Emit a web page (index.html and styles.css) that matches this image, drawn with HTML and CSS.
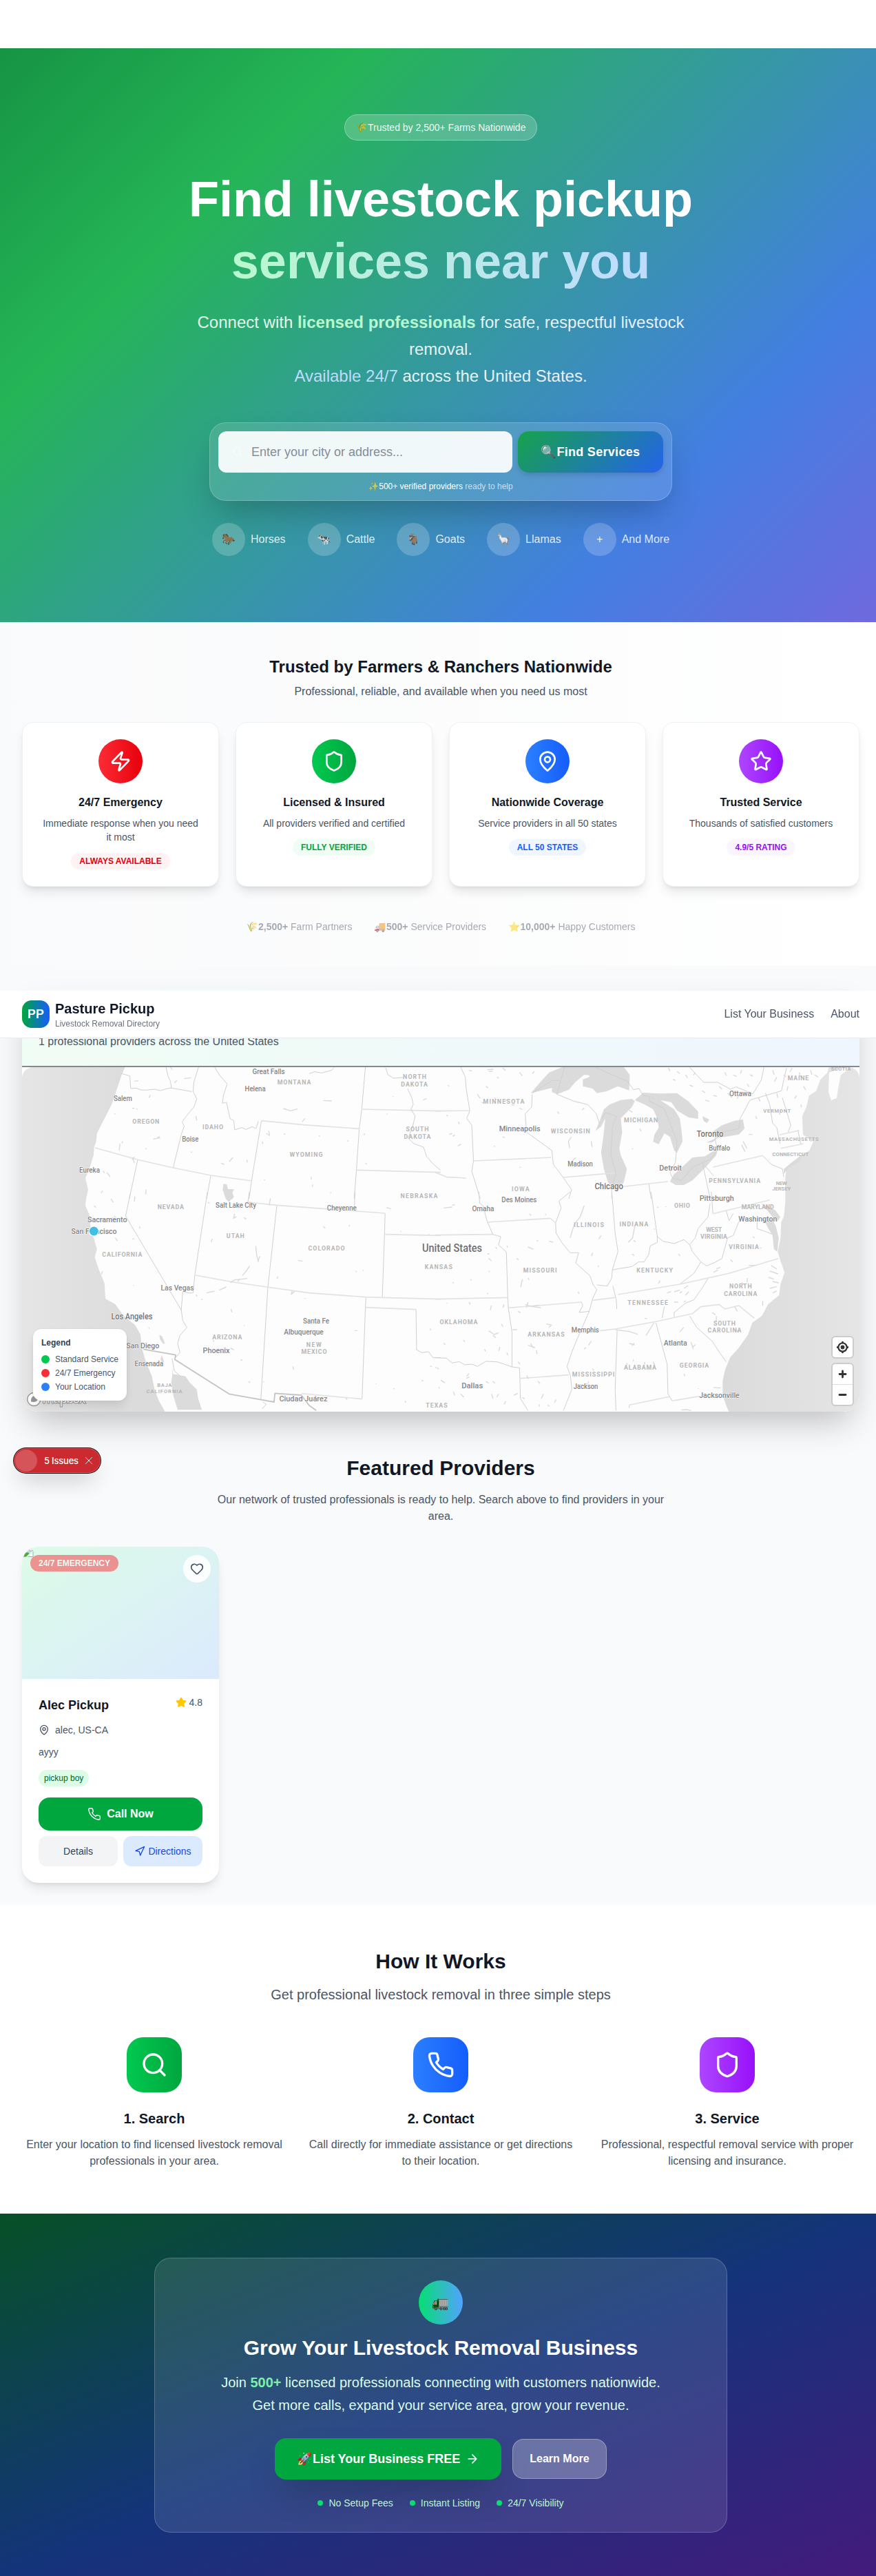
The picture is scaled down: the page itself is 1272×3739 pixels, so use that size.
FILE: index.html
```html
<!DOCTYPE html>
<html lang="en">
<head>
<meta charset="utf-8">
<title>Pasture Pickup</title>
<link rel="stylesheet" href="styles.css">
</head>
<body>
<svg class="sprite" aria-hidden="true">
  <symbol id="zap" viewBox="0 0 24 24"><path d="M4 14a1 1 0 0 1-.78-1.63l9.9-10.2a.5.5 0 0 1 .86.46l-1.92 6.02A1 1 0 0 0 13 10h7a1 1 0 0 1 .78 1.63l-9.9 10.2a.5.5 0 0 1-.86-.46l1.92-6.02A1 1 0 0 0 11 14z"/></symbol>
  <symbol id="shield" viewBox="0 0 24 24"><path d="M20 13c0 5-3.5 7.5-7.66 8.95a1 1 0 0 1-.67-.01C7.5 20.5 4 18 4 13V6a1 1 0 0 1 1-1c2 0 4.5-1.2 6.24-2.72a1.17 1.17 0 0 1 1.52 0C14.51 3.81 17 5 19 5a1 1 0 0 1 1 1z"/></symbol>
  <symbol id="pin" viewBox="0 0 24 24"><path d="M20 10c0 4.993-5.539 10.193-7.399 11.799a1 1 0 0 1-1.202 0C9.539 20.193 4 14.993 4 10a8 8 0 0 1 16 0"/><circle cx="12" cy="10" r="3"/></symbol>
  <symbol id="star" viewBox="0 0 24 24"><path d="M11.525 2.295a.53.53 0 0 1 .95 0l2.31 4.679a2.123 2.123 0 0 0 1.595 1.16l5.166.756a.53.53 0 0 1 .294.904l-3.736 3.638a2.123 2.123 0 0 0-.611 1.878l.882 5.14a.53.53 0 0 1-.771.56l-4.618-2.428a2.122 2.122 0 0 0-1.973 0L6.396 21.01a.53.53 0 0 1-.77-.56l.881-5.139a2.122 2.122 0 0 0-.611-1.879L2.16 9.795a.53.53 0 0 1 .294-.906l5.165-.755a2.122 2.122 0 0 0 1.597-1.16z"/></symbol>
  <symbol id="phone" viewBox="0 0 24 24"><path d="M22 16.92v3a2 2 0 0 1-2.18 2 19.79 19.79 0 0 1-8.63-3.07 19.5 19.5 0 0 1-6-6 19.79 19.79 0 0 1-3.07-8.67A2 2 0 0 1 4.11 2h3a2 2 0 0 1 2 1.72 12.84 12.84 0 0 0 .7 2.81 2 2 0 0 1-.45 2.11L8.09 9.91a16 16 0 0 0 6 6l1.27-1.27a2 2 0 0 1 2.11-.45 12.84 12.84 0 0 0 2.81.7A2 2 0 0 1 22 16.92z"/></symbol>
  <symbol id="heart" viewBox="0 0 24 24"><path d="M2 9.5a5.5 5.5 0 0 1 9.591-3.676.56.56 0 0 0 .818 0A5.49 5.49 0 0 1 22 9.5c0 2.29-1.5 4-3 5.5l-5.492 5.313a2 2 0 0 1-3 .019L5 15c-1.5-1.5-3-3.2-3-5.5"/></symbol>
  <symbol id="search" viewBox="0 0 24 24"><circle cx="11" cy="11" r="8"/><path d="m21 21-4.3-4.3"/></symbol>
  <symbol id="nav" viewBox="0 0 24 24"><path d="M3 11 22 2l-9 19-2-8z"/></symbol>
  <symbol id="arrow" viewBox="0 0 24 24"><path d="M5 12h14M12 5l7 7-7 7"/></symbol>
  <symbol id="close" viewBox="0 0 24 24"><path d="M3 3l18 18M21 3L3 21"/></symbol>
</svg>
<div class="viewport">
<div class="page">

<header class="site-header">
  <div class="brand">
    <span class="logo">PP</span>
    <span class="brand-text"><b>Pasture Pickup</b><small>Livestock Removal Directory</small></span>
  </div>
  <nav class="menu"><a>List Your Business</a><a>About</a></nav>
</header>

<section class="hero">
  <div class="hero-badge"><span class="emoji">🌾</span>Trusted by 2,500+ Farms Nationwide</div>
  <h1>Find livestock pickup<br><span>services near you</span></h1>
  <p class="lead">Connect with <b>licensed professionals</b> for safe, respectful livestock removal.<br><i>Available 24/7</i> across the United States.</p>
  <div class="search-box">
    <div class="search-row">
      <div class="search-input"><svg class="icon"><use href="#search"/></svg>Enter your city or address...</div>
      <div class="search-btn"><span>🔍</span>Find Services</div>
    </div>
    <div class="search-note"><span>✨</span><b>500+ verified providers</b> ready to help</div>
  </div>
  <div class="animals">
    <div><span><i class="horse">🐎</i></span>Horses</div>
    <div><span>🐄</span>Cattle</div>
    <div><span><i class="goat">🐐</i></span>Goats</div>
    <div><span>🦙</span>Llamas</div>
    <div><span>+</span>And More</div>
  </div>
</section>

<section class="trust">
  <h2>Trusted by Farmers &amp; Ranchers Nationwide</h2>
  <p class="sub">Professional, reliable, and available when you need us most</p>
  <div class="trust-grid">
    <article class="red"><div class="disc"><svg class="icon"><use href="#zap"/></svg></div><h3>24/7 Emergency</h3><p>Immediate response when you need it most</p><span class="tag">ALWAYS AVAILABLE</span></article>
    <article class="green"><div class="disc"><svg class="icon"><use href="#shield"/></svg></div><h3>Licensed &amp; Insured</h3><p>All providers verified and certified</p><span class="tag">FULLY VERIFIED</span></article>
    <article class="blue"><div class="disc"><svg class="icon"><use href="#pin"/></svg></div><h3>Nationwide Coverage</h3><p>Service providers in all 50 states</p><span class="tag">ALL 50 STATES</span></article>
    <article class="purple"><div class="disc"><svg class="icon"><use href="#star"/></svg></div><h3>Trusted Service</h3><p>Thousands of satisfied customers</p><span class="tag">4.9/5 RATING</span></article>
  </div>
  <div class="stats">
    <div>🌾<b>2,500+</b> Farm Partners</div>
    <div>🚚<b>500+</b> Service Providers</div>
    <div>⭐<b>10,000+</b> Happy Customers</div>
  </div>
</section>

<section class="directory">
  <div class="map-card">
    <div class="map-head"><p>1 professional providers across the United States</p></div>
    <div class="map">
      <svg class="map-art" viewBox="32 1549 1216 500">
        <defs>
          <linearGradient id="sea" gradientUnits="userSpaceOnUse" x1="32" y1="0" x2="1248" y2="0">
            <stop offset="0" stop-color="#e5e5e5"/><stop offset=".14" stop-color="#dbdbdb"/><stop offset=".84" stop-color="#dbdbdb"/><stop offset="1" stop-color="#e5e5e5"/>
          </linearGradient>
        </defs>
        <path fill="url(#sea)" d="M32 1549H181.6L176.7 1560 169.4 1581.7 162 1603.3 151 1625 140.8 1645 139.6 1656.7 136.7 1665 135.9 1676.7 129.8 1696.7 124 1710 128 1726.7 125 1740 124 1750 129.8 1763.3 131.4 1780 136 1796.7 140.8 1813 137.6 1825 143.7 1843 151.8 1863 153 1885 167.3 1893 179.6 1910 196 1923 204 1937 206 1957 212 1977 220.4 1997 224.5 2017 230.6 2033 239.6 2049H32Z"/>
        <path fill="url(#sea)" d="M1203.4 1549l-2 8-10.2 10-6 16.6-10.4 6.7-4 16.6-6 13.4 1.2 26.6 15 10-6 13.4-12.3 6.6-20.4 16.7-2 16.7V1745l-2 20-4 9-1 23-4 20 4 13 6 17-6 17-2 16-16 13-9 17-14 10-6 17-14 20-12 13-7 17-4 17v20l4 13 5 12H1248V1549Z"/>
        <path fill="#fdfdfd" d="M1204 1557l16-7 14 1-13 9-4 20-2 14-8 3-4-12Z"/>
        <g transform="matrix(.40816 0 0 .33333 0 1390)">
          <path class="line" d="M433 505l29 10 3 55 20 -2 15 8 20 1 30-4 20 6 35-12 77 16M610 567l-4-30-8-20-8-42M707 475l-17 65-3 43 13 32-10 35-30 45-12 20 7 20-10 35-29 145M763 475l17 35 28 40-13 50-4 34 15-4 12 70 14 10 3 40 25-10 15 8 22-12 14 8 8-32M930 710l-35 262-9 78M1300 475l-13 185-9 85-10 180-8 125"/>
          <path class="line wide" d="M930 710l150 18 200 17M1287 660l281 8M1268 925l300 10M338 828l152 52 126 35 134 33 145 24"/>
          <path class="line" d="M490 880l-30 170M750 948l-15 102M1100 505l20-8 25 5 35-12 8-12M1372 480l8 30 20 15 35-3M1450 570l15 40 5 30-8 20 15 30-10 50-15 45 20 25 35 15 10 40 25 35 25 25"/>
          <path class="speck" d="M470 655l8 2M485 657l4 4M408 678l2 4M427 810l-3 30M436 800l-2 8M472 870l6 25M545 790l25-6M560 783l8-3M518 830l4 4M680 845l3 4M786 895l12 5M815 888l14-18M878 880l2 12M947 765l14 10M956 755l3 15M934 800v12M1010 767l5 3M1134 775l4 2M1235 797l5 2M1107 955v12M1112 988v10M1175 1022l3 3M1150 622l30 2M1008 657l25 10 25-8M1075 715l10-15M1376 680l3 2M1398 604l2 2M1505 620l12-6M520 1010l-2 20M380 935l12 20M367 928l4 10M697 690l3 20M535 598l-5 12M620 545l10-10M655 527l25-4M940 965l2 5M365 1015l-5 10M1300 895l5 5M1296 765v8M478 538l14-2M470 880l8-12M605 475l8 12"/>
          <path class="lake" d="M795 985l12 3 4 20 22 0-6 15 5 20-8 10-14-10-18-30Z"/>
        </g>
        <g transform="matrix(.40816 0 0 .33333 632 1390)">
          <path class="lake" d="M455 475L405 500 375 540 340 590 415 567 415 585 433 595 475 575 500 540 530 510 548 512 548 520 525 530 525 560 560 570 575 590 610 582 650 560 690 578 692 510 670 475ZM700 615L660 620 620 640 600 660 585 710 570 755 590 735 605 700 598 780 590 850 600 920 615 980 645 1010 670 980 682 920 660 860 655 830 665 760 660 700 700 650 710 625ZM710 620L740 588 800 592 860 590 900 625 935 670 935 702 900 695 860 665 840 630 800 620 850 660 870 700 875 740 880 800 860 850 850 840 835 780 815 765 795 812 775 802 780 770 795 740 790 700 775 660 745 640ZM848 945L835 975 855 990 885 990 915 970 960 915 1000 860 1003 840 985 845 960 865 915 870 880 910ZM985 760L1000 785 965 805 985 805 1005 785 1080 770 1100 745 1095 705 1065 710 1020 730ZM950 690l25 15-8 15-12-8ZM1240 920l30-30 35-30-10 30-35 22-20 30Z"/>
          <path class="line" d="M570 478l115 62 20 35 20-5 15 30 22 5v20l53 32 45 143-5 90-20 45 10 25 30 10 45-60 55-30 30-40-10-50 5-25 80-20 5-45 35-80 112-40 10-60 8-40M345 590l70-55h30M460 475l-27 120M645 690l-40-15-10 25M645 690l-15 50-5 120 18 80-15 60 0 50M90 475l17 45 3 50 13 96-11 34 18 30 6 155-6 45 30 120M345 595l-2 55-23 30 5 80 45 40 45 40 5 60 35 57 30 53-10 40M433 595l60 30 50 15 30 40 10 40M760 985l8 65M950 890l28 160M955 900l35 50M1165 862l30 38 40 20 5 35M1175 590l15 50 10 80 15 20 12 70M1290 750l10 60M1235 610l10 40 20 80-10 30M905 478l50 65h50l45 30 20-10 60 30 30-60 10-60"/>
          <path class="line wide" d="M0 668l123-2M136 885l277-15M455 957l185-20M670 997l158-22M988 912l177-50M1225 772l70-20M1230 830l80-20M0 935l40 20 70 5"/>
          <path class="speck" d="M185 488l22-2M190 495h14M240 480l10 12M300 500l10 15M345 505l8-10M150 595l10 18M180 560l8 8M220 520l6 6M245 625l10-5M270 640l12 2M165 630l8 4M210 610l8 8M300 655l10 6M45 555l4 5M40 685l5 6M82 715l4 10M50 770l10-5M80 820l12-8M62 778l8-6M208 820l4 2M240 780l8 4M300 912l4 2M555 800l3 25M478 830l-4-30 10-20M500 870l-20 25M440 680l-5-10M530 655l-8 8M700 830l3 4M728 745l4 12M830 480l5 15M860 495l10 10M845 530l10 5M890 510l8 14M925 500l-6 12M905 555l12 6M950 580l10 8M960 620l15 6M1010 560l10 12M990 600l12 4M1030 500l6 14M1060 510l12 8M1090 490l-4 14M1120 510l10 6M1110 550l6 12M1150 610l6 16M1140 690l4 12M1215 520l-8 20M1200 490l6 20M1215 590l4 20M1230 660l-5 24M1270 480l-8 18M1295 500l4 20M1310 560l8 16M1285 600l-6 14M1300 640l4 12M1335 490l5 20M1350 510l12 10M1095 800l14 30M1090 815l12 30M1115 770h14M765 610l40 10 40-12M780 600l40 22M630 660l10 20M1255 560l-4 20M1240 510l8 10M560 490h8M120 490l10 4M690 665l12 8M1040 590l16 20M1080 600l-6 14M1335 800l12-12"/>
        </g>
        <g transform="matrix(.40816 0 0 .33333 0 1730)">
          <path class="line" d="M465 0l-18 105 198 410 5 45 15 30-25 35-8 35 8 40-18 25M738 0l-45 362-6 78-15 0-22-5-5 80M887 0l-5 45M985 58l-32 357-25 490M1370 93l-2 92-8 275M1302 458l-2 45-12 399M1480 512l2 175 18 13 25-4 15 26 28 0M1263 0l-3 85M612 725l8 55 40 40M935 915l12 10-15 20"/>
          <path class="line wide" d="M882 45l103 13 385 35M1368 185l200 5M693 362l137 31 123 22 147 25 200 18 60 2 208 7M1300 503l180 9M1072 878l216 24"/>
          <path class="border" d="M510 685l115 25-3 20 193 150 160 35 3-38 94 8 28 45 25 22"/>
          <path class="lake" d="M567 622l10 8 10 30-6 2-12-20ZM795 0h28l6 20-14 25-12-15ZM575 710l8 25-2 15-10-20ZM612 760l3 33 45 10 15 27 25 30 5 40 13 49H632l-15-60-8-60 4-30Z"/>
          <path class="speck" d="M480 20l-2 22M497 150v10M470 205h8M410 200l8 14M335 60l6 8M365 345l-4 14M474 407h3M755 205l-4 14M835 95l-4 20 10-8M868 112l8 6M910 235l3 40 7 30M925 280l-8 22M820 395l15-12 25-3 20-3M862 365l14-20 12-22M845 390l10-12M1040 430l-4 16 12-12M988 368l-2 10M1060 298l16 4M1150 152l8 6M1243 144v6M1265 345l4 4M1292 340v4M1375 68l16 6M962 28l-4 30M735 440l28-8M780 428l25-14M718 465v6M697 447l4 8M822 510l3 14M868 580l2 4M1042 760l2 14M1262 604h10M820 680l12 8M855 732h8M885 825l4 6M938 825v4M1400 855l4 4M1440 910l4 8M1337 835h3M1500 820l6 4M1530 758l6 4M1560 850l4 6M1425 170v4M1525 185l4 2M1085 462v4M740 48h6M370 510l12 8M400 515l6 6M455 592l4 6M440 925v16M760 645v8M530 590v6M395 30l8 16M405 105l8 6M400 110v12M1530 595l2 8M1555 765l5 8M1230 895l5 10"/>
        </g>
        <g transform="matrix(.40816 0 0 .33333 632 1730)">
          <path class="line" d="M155 0l3 50 12 10 15 70 20 55 28 10-8 35 28 32 5 198 2 45 13 105v152l27 4 3 134 27 52M0 722l40 2 20 21 25-6 20 14 25-3 20 10 30-22 40 2 20 8 33 14M480 0l-40 40 8 30-20 65 2 45 20 40 30 45 30 0-10 45 50 55 12 40 13 20-15 40-12 55-25 70-18 50-20 60-16 60 12 40 5 60-30 92M410 115l18 20M628 0l12 180 10 80-20 80-2 35-16 35-37-5M768 0l22 195v25l-25 15-6 40-16 30-20 0-23 20-50 10-20 5M790 195l20 20 40 10 20-10 15-7 20 22 20-30 10-40 35-50 8-60M905 230l10 30 30 45 20 17 30-15 25-17 20-90 20-10 20-60 20-25M945 305l-25 50-50 47M970 378l-20 40-30 52-30 15-40 40v20M520 480l5 15-13 30 36-5M632 410l12 60 2 40M647 605l-7 255 3 92M785 570l40 180 3 130 15 30M905 540l25 50 55 60 27 50 23 40M690 940v-12M982 0l6 95M1035 80l10 45 15-30M1145 130v30l35 15 20 10M990 852l25 2"/>
          <path class="line wide" d="M0 188l208-3M0 467l258-7M185 132l225-17M260 505l260-25M303 812l172-15M560 472l80-12M650 447l220-45 175-47 175-65M585 605l55-8 145-32 130-35 30-30 65-10 20 20 50-15 55 55M690 928l143-36M843 910l97-20M988 95l202-60"/>
          <path class="lake" d="M1160 50l50 30 18 30-12 20-15-20ZM1165 110l20 50 15 30 5 60 12 10 5-60-10-50-12-30Z"/>
          <path class="speck" d="M255 235l3 8M405 215l14 4M330 240l20 10M362 210l4 6M310 380l-6 35M330 375l4 8M315 340l10 5M290 290l6 6M215 240l4 8M185 270h8M190 290l10 10M190 345l4 4M62 393l4 5M125 380l4 6M185 440l3 5M120 480l5 10M200 495l-4 20M245 490l-4 14M295 520l8 6M320 490l20 8 30-4M330 480l-6 24M345 500l30 4M275 600h16M235 575l6 12M190 605l20 16 15-8M205 625l10 10M100 645l5 8M175 685l4 10M230 675l-4 18M255 700l3 12M330 668l25 10M340 660l8 20M360 690l2 16M295 740l6 10M395 575l20 5M405 590l8-10M508 435l4 8M560 265l-4 14M580 320v8M555 650l-10 18M530 685l6-8M690 660l20 6M700 670l8-12M640 600l50 8 30 12M750 625l28-55M745 550l8 2M790 65l4 4M820 62v4M780 160v5M710 150l-8 50-15 20M705 210l8 8M700 270l8 8M865 270l6 8M590 190l-8 16M530 60l-15 50-20 30-15 60M365 825l8 10M325 800l6 14M20 820l14 12M65 870l4 16M90 880l12 14M120 790l-8 14M110 812l12-6M180 825l10 8M205 825l8 8M225 880l-6 14M200 880l6 20M280 885l14-8M245 925l6-14M310 895l8 6M385 880l-8 20M430 905l-6 12M400 928l6 6M370 925v10M850 435l20-8M885 420l15-12M870 440l8-6M890 450l12-16M800 385l-6 14M850 480h14M885 480l6-6M825 440l14-6M990 350l16-10M1000 335l14-6M1115 320h24M1050 295l8 10M1110 375v20M1090 395l10 10M1130 195l6 6M1155 245h6M1165 475v20M1185 372l20 8M1190 345l30 12M1200 390l22 6M1190 420l25-8M1200 440l14-8M1195 320l20 16M870 610l14-20M910 655l8 30M925 665l-8 10M935 855v4M885 792l3 10M815 500l-8 50M985 525l12 10M1000 540v25M1065 500l10 20M1070 600l10 12M680 745l4 8M745 740v12M775 740l6 14M705 730v8M505 840h16M545 825v10M530 835h12M560 770l4 8M30 70l30-4M60 58l10-2M335 95l6 8M393 95v6M0 765h4M30 658l6 8M40 485h4M875 950l20-2 15 4"/>
        </g>
        <g class="states">
          <text x="427" y="1574" textLength="48.6">MONTANA</text><text x="211.8" y="1630.5" textLength="39">OREGON</text><text x="309" y="1638.5" textLength="30">IDAHO</text><text x="444.5" y="1679" textLength="48">WYOMING</text>
          <text x="602" y="1566" textLength="34">NORTH</text><text x="601.6" y="1576.5" textLength="38.5">DAKOTA</text><text x="606" y="1642" textLength="33">SOUTH</text><text x="606" y="1652.5" textLength="39">DAKOTA</text>
          <text x="608.5" y="1738.5" textLength="54">NEBRASKA</text><text x="247.8" y="1754.5" textLength="38">NEVADA</text><text x="341.8" y="1797" textLength="26">UTAH</text><text x="474" y="1814.5" textLength="53">COLORADO</text>
          <text x="177.3" y="1824" textLength="58">CALIFORNIA</text><text x="329.8" y="1944" textLength="43">ARIZONA</text><text x="455.7" y="1954.5" textLength="22">NEW</text><text x="456" y="1965" textLength="37">MEXICO</text>
          <text x="238.8" y="2013" textLength="21" class="sm">BAJA</text><text x="238.6" y="2022" textLength="52" class="sm">CALIFORNIA</text><text x="636.8" y="1841.5" textLength="40">KANSAS</text><text x="634" y="2043" textLength="31.5">TEXAS</text>
          <text x="731.4" y="1602" textLength="60">MINNESOTA</text><text x="828.3" y="1645" textLength="57">WISCONSIN</text><text x="930.6" y="1628.5" textLength="49">MICHIGAN</text><text x="1159" y="1568" textLength="30.6">MAINE</text>
          <text x="1221" y="1553.5" textLength="28.5" class="sm">SCOTIA</text><text x="1128.3" y="1615" textLength="40" class="sm">VERMONT</text><text x="1152.8" y="1656" textLength="72" class="sm">MASSACHUSETTS</text><text x="1147.8" y="1677.5" textLength="52.6" class="sm">CONNECTICUT</text>
          <text x="1066.7" y="1717" textLength="75">PENNSYLVANIA</text><text x="1134.7" y="1720" textLength="16" class="sm">NEW</text><text x="1134.7" y="1728" textLength="27" class="sm">JERSEY</text><text x="755.9" y="1729" textLength="25.7">IOWA</text>
          <text x="990.4" y="1753" textLength="23">OHIO</text><text x="1100.2" y="1754.5" textLength="47">MARYLAND</text><text x="855" y="1780.5" textLength="43.6">ILLINOIS</text><text x="920.4" y="1780" textLength="42">INDIANA</text>
          <text x="1036.7" y="1788" textLength="23">WEST</text><text x="1036.5" y="1797.5" textLength="39">VIRGINIA</text><text x="1080" y="1813" textLength="43.6">VIRGINIA</text><text x="784.2" y="1846.5" textLength="49">MISSOURI</text>
          <text x="950.6" y="1846.5" textLength="52.6">KENTUCKY</text><text x="1075.3" y="1870" textLength="32.6">NORTH</text><text x="1075.3" y="1880.5" textLength="48">CAROLINA</text><text x="940.6" y="1894" textLength="58.8">TENNESSEE</text>
          <text x="666" y="1922" textLength="55">OKLAHOMA</text><text x="793" y="1940" textLength="53.5">ARKANSAS</text><text x="1052" y="1923.5" textLength="32">SOUTH</text><text x="1052" y="1934" textLength="49">CAROLINA</text>
          <text x="929.5" y="1988" textLength="47">ALABAMA</text><text x="1008" y="1985" textLength="42.4">GEORGIA</text><text x="861.6" y="1998" textLength="61.6">MISSISSIPPI</text>
        </g>
        <g class="cities">
          <text x="390" y="1559" textLength="47" lengthAdjust="spacingAndGlyphs">Great Falls</text><text x="370.6" y="1583.5" textLength="30" lengthAdjust="spacingAndGlyphs">Helena</text><text x="178.4" y="1598" textLength="27" lengthAdjust="spacingAndGlyphs">Salem</text><text x="276.3" y="1656.5" textLength="24" lengthAdjust="spacingAndGlyphs">Boise</text>
          <text x="130" y="1701.5" textLength="30" lengthAdjust="spacingAndGlyphs">Eureka</text><text x="342.6" y="1752.5" textLength="59" lengthAdjust="spacingAndGlyphs">Salt Lake City</text><text x="496.3" y="1757" textLength="43" lengthAdjust="spacingAndGlyphs">Cheyenne</text><text x="155.7" y="1774" textLength="57.5" lengthAdjust="spacingAndGlyphs">Sacramento</text>
          <text x="136.5" y="1790.5" textLength="66" lengthAdjust="spacingAndGlyphs">San Francisco</text><text x="257.5" y="1873" textLength="48" lengthAdjust="spacingAndGlyphs">Las Vegas</text><text x="191.4" y="1915" textLength="60" lengthAdjust="spacingAndGlyphs" class="big">Los Angeles</text><text x="207.3" y="1957" textLength="48" lengthAdjust="spacingAndGlyphs">San Diego</text>
          <text x="216.3" y="1982.5" textLength="41.6" lengthAdjust="spacingAndGlyphs">Ensenada</text><text x="314" y="1964" textLength="39" lengthAdjust="spacingAndGlyphs">Phoenix</text><text x="459" y="1920.5" textLength="38" lengthAdjust="spacingAndGlyphs">Santa Fe</text><text x="441" y="1936.5" textLength="57.5" lengthAdjust="spacingAndGlyphs">Albuquerque</text>
          <text x="440.4" y="2033.5" textLength="70" lengthAdjust="spacingAndGlyphs">Ciudad Juárez</text><text x="1075" y="1590.5" textLength="32" lengthAdjust="spacingAndGlyphs">Ottawa</text><text x="754.7" y="1642" textLength="60" lengthAdjust="spacingAndGlyphs">Minneapolis</text><text x="1031" y="1650" textLength="39" lengthAdjust="spacingAndGlyphs" class="big">Toronto</text>
          <text x="1044.7" y="1669.5" textLength="31" lengthAdjust="spacingAndGlyphs">Buffalo</text><text x="842.6" y="1693" textLength="36.5" lengthAdjust="spacingAndGlyphs">Madison</text><text x="973.6" y="1699" textLength="32.6" lengthAdjust="spacingAndGlyphs">Detroit</text><text x="884.2" y="1726" textLength="41.6" lengthAdjust="spacingAndGlyphs" class="big">Chicago</text>
          <text x="753.8" y="1745" textLength="51" lengthAdjust="spacingAndGlyphs">Des Moines</text><text x="701.4" y="1757.5" textLength="32" lengthAdjust="spacingAndGlyphs">Omaha</text><text x="1040.7" y="1742.5" textLength="50" lengthAdjust="spacingAndGlyphs">Pittsburgh</text><text x="1100.3" y="1772.5" textLength="56" lengthAdjust="spacingAndGlyphs">Washington</text>
          <text x="849.8" y="1933.5" textLength="40" lengthAdjust="spacingAndGlyphs">Memphis</text><text x="980.8" y="1952.5" textLength="34" lengthAdjust="spacingAndGlyphs">Atlanta</text><text x="850.6" y="2015.5" textLength="35.5" lengthAdjust="spacingAndGlyphs">Jackson</text><text x="685.7" y="2015" textLength="31" lengthAdjust="spacingAndGlyphs">Dallas</text>
          <text x="1044.5" y="2029" textLength="58.4" lengthAdjust="spacingAndGlyphs">Jacksonville</text>
          <text x="656.5" y="1817" textLength="87" lengthAdjust="spacingAndGlyphs" class="country">United States</text>
        </g>
        <circle cx="136.3" cy="1787" r="7.5" fill="#fff"/><circle cx="136.3" cy="1787" r="6.5" fill="#43bfe2"/>
        <g class="mapbox"><circle cx="49.3" cy="2031" r="9.5"/><path d="M45 2034.5c-.4-4 1-7.500 4.500-8.500 3.500-.8 6 2 5 5.500-1 3.300-5 4-9.500 3z"/><text x="61" y="2036.500" textLength="64">mapbox</text></g>
      </svg>
      <div class="legend">
        <b>Legend</b>
        <div><i class="dot-green"></i>Standard Service</div>
        <div><i class="dot-red"></i>24/7 Emergency</div>
        <div><i class="dot-blue"></i>Your Location</div>
      </div>
      <div class="controls">
        <div class="ctl"><svg viewBox="0 0 20 20" width="29" height="29"><path fill="#333" fill-rule="evenodd" d="M10 4C9 4 9 5 9 5v.1A5 5 0 0 0 5.100 9H5s-1 0-1 1 1 1 1 1h.1A5 5 0 0 0 9 14.900v.1s0 1 1 1 1-1 1-1v-.1a5 5 0 0 0 3.900-3.900h.1s1 0 1-1-1-1-1-1h-.1A5 5 0 0 0 11 5.100V5s0-1-1-1zm0 2.500a3.500 3.500 0 1 1 0 7 3.500 3.500 0 1 1 0-7z"/><circle cx="10" cy="10" r="2" fill="#333"/></svg></div>
        <div class="ctl"><svg viewBox="0 0 29 29" width="29" height="29"><path class="glyph" d="M14.500 10v9M10 14.500h9"/></svg><svg class="minus" viewBox="0 0 29 29" width="29" height="29"><path class="glyph" d="M10 14.500h9"/></svg></div>
      </div>
    </div>
  </div>

  <h2 class="section-title">Featured Providers</h2>
  <p class="sub narrow">Our network of trusted professionals is ready to help. Search above to find providers in your area.</p>
  <article class="provider">
    <div class="photo">
      <svg class="broken" viewBox="0 0 16 16"><path d="M1 1h9l5 5v8.500H1z" fill="#fff" stroke="#a9a9a9"/><path d="M2 2h7.500v4H14v3.500L2 13z" fill="#c3d8f7"/><path d="M2 12c1-4 5-5 8-2l-4 4H2z" fill="#4caf37"/><path d="M15 6l-10 10" stroke="#dcfce7" stroke-width="2"/><path d="M10 1v5h5" fill="#fff" stroke="#a9a9a9"/></svg>
      <span class="emergency">24/7 EMERGENCY</span>
      <span class="fav"><svg class="icon"><use href="#heart"/></svg></span>
    </div>
    <div class="provider-body">
      <div class="name-row"><h3>Alec Pickup</h3><span><svg class="icon gold"><use href="#star"/></svg>4.8</span></div>
      <div class="place"><svg class="icon"><use href="#pin"/></svg>alec, US-CA</div>
      <p>ayyy</p>
      <span class="chip">pickup boy</span>
      <div class="call"><svg class="icon"><use href="#phone"/></svg>Call Now</div>
      <div class="actions"><div>Details</div><div class="dir"><svg class="icon"><use href="#nav"/></svg>Directions</div></div>
    </div>
  </article>
</section>

<section class="how">
  <h2 class="section-title">How It Works</h2>
  <p class="sub big">Get professional livestock removal in three simple steps</p>
  <div class="steps">
    <div class="green"><span class="tile"><svg class="icon"><use href="#search"/></svg></span><h3>1. Search</h3><p>Enter your location to find licensed livestock removal professionals in your area.</p></div>
    <div class="blue"><span class="tile"><svg class="icon"><use href="#phone"/></svg></span><h3>2. Contact</h3><p>Call directly for immediate assistance or get directions to their location.</p></div>
    <div class="purple"><span class="tile"><svg class="icon"><use href="#shield"/></svg></span><h3>3. Service</h3><p>Professional, respectful removal service with proper licensing and insurance.</p></div>
  </div>
</section>

<section class="cta">
  <div class="cta-card">
    <div class="cta-disc"><i>🚛</i></div>
    <h2>Grow Your Livestock Removal Business</h2>
    <p>Join <b>500+</b> licensed professionals connecting with customers nationwide.<br>Get more calls, expand your service area, grow your revenue.</p>
    <div class="cta-btns">
      <div class="primary"><span>🚀</span>List Your Business FREE<svg class="icon"><use href="#arrow"/></svg></div>
      <div class="secondary">Learn More</div>
    </div>
    <div class="perks"><span>No Setup Fees</span><span>Instant Listing</span><span>24/7 Visibility</span></div>
  </div>
</section>

<div class="issues"><span class="mark"></span>5 Issues<svg class="icon"><use href="#close"/></svg></div>
</div>
</div>
</body>
</html>
```
FILE: styles.css
```css
* { box-sizing: border-box; margin: 0; padding: 0; }
body { background: #fff; color: #101828; font: 16px/24px "Liberation Sans", Arial, "Noto Color Emoji", sans-serif; }
i { font-style: normal; }
.sprite { position: absolute; width: 0; height: 0; }
.viewport { height: 3739px; overflow: clip; }
.page { position: relative; width: 1280px; padding-top: 70px; }
.icon { width: 16px; height: 16px; flex: none; fill: none; stroke: currentColor; stroke-width: 2; stroke-linecap: round; stroke-linejoin: round; }

/* sticky header, shown over the map card */
.site-header { position: absolute; z-index: 5; top: 1438px; left: 0; width: 1280px; height: 69px; padding: 0 32px; display: flex; align-items: center; justify-content: space-between; background: rgba(255,255,255,.96); border-bottom: 1px solid #e9ebee; backdrop-filter: blur(8px); }
.brand { display: flex; align-items: center; gap: 8px; }
.logo { width: 40px; height: 40px; border-radius: 14px; background: linear-gradient(90deg, #00a63e, #155dfc); color: #fff; font-weight: 700; font-size: 18px; line-height: 40px; text-align: center; }
.brand-text { display: flex; flex-direction: column; }
.brand-text b { font-size: 20px; line-height: 28px; }
.brand-text small { font-size: 12px; line-height: 16px; color: #6a7282; }
.menu { display: flex; gap: 24px; color: #4a5565; }

.hero { height: 833px; padding-top: 96px; display: flex; flex-direction: column; align-items: center; text-align: center; color: #fff; background: linear-gradient(135deg, #169444 0%, #25b557 25%, #437fe1 76%, #7069de 100%); }
.hero-badge { height: 38px; padding: 0 16px; display: flex; align-items: center; font-size: 14px; color: rgba(255,255,255,.92); background: rgba(255,255,255,.2); border: 1px solid rgba(255,255,255,.3); border-radius: 19px; }
.hero h1 { margin-top: 40px; font-size: 72px; line-height: 90px; font-weight: 700; }
.hero h1 span { background: linear-gradient(90deg, #b9f8cf, #bedbff); -webkit-background-clip: text; background-clip: text; color: transparent; }
.lead { margin-top: 24px; width: 768px; font-size: 24px; line-height: 39px; color: rgba(255,255,255,.9); }
.lead b { color: #b9f8cf; }
.lead i { color: #bedbff; }
.search-box { margin-top: 48px; width: 672px; height: 114px; padding: 12px; border: 1px solid rgba(255,255,255,.2); border-radius: 24px; background: rgba(255,255,255,.12); box-shadow: 0 25px 50px -12px rgba(0,0,0,.25); }
.search-row { display: flex; gap: 8px; height: 60px; }
.search-input { flex: 1; display: flex; align-items: center; padding-left: 20px; gap: 12px; border-radius: 12px; background: rgba(255,255,255,.92); color: #868d97; font-size: 18px; }
.search-input .icon { color: #fff; opacity: .5; }
.search-btn { width: 211px; display: flex; align-items: center; justify-content: center; border-radius: 16px; background: linear-gradient(135deg, #16a34a, #2563eb); font-size: 18px; font-weight: 700; letter-spacing: .3px; box-shadow: 0 4px 8px -1px rgba(0,0,0,.15); }
.search-btn span { filter: grayscale(.8); }
.search-note { margin-top: 8px; font-size: 12px; line-height: 24px; color: rgba(255,255,255,.7); }
.search-note b { font-weight: 400; color: #fff; }
.animals { margin-top: 32px; display: flex; gap: 32px; color: rgba(255,255,255,.85); }
.animals div { display: flex; align-items: center; gap: 8px; }
.animals span { width: 48px; height: 48px; line-height: 48px; border-radius: 50%; background: rgba(255,255,255,.2); }
.animals i { display: inline-block; }
.animals .horse { filter: brightness(.6); }
.animals .goat { filter: brightness(.85); }

.trust { height: 499px; padding: 48.5px 32px 0; text-align: center; background: linear-gradient(90deg, #f9fafb, #fff); }
.trust h2 { font-size: 24px; line-height: 32px; }
.sub { margin-top: 8px; color: #4a5565; }
.trust-grid { margin-top: 32px; display: grid; grid-template-columns: repeat(4, 1fr); gap: 24px; }
.trust article { height: 239px; padding: 24px; background: #fff; border: 1px solid #f0f1f4; border-radius: 16px; box-shadow: 0 10px 15px -3px rgba(0,0,0,.1), 0 4px 6px -4px rgba(0,0,0,.1); }
.disc { width: 64px; height: 64px; margin: 0 auto 16px; display: flex; align-items: center; justify-content: center; border-radius: 50%; color: #fff; background: linear-gradient(90deg, var(--a), var(--b)); }
.disc .icon { width: 32px; height: 32px; }
.trust h3 { font-size: 16px; }
.trust article p { margin: 8px 0 12px; font-size: 14px; line-height: 20px; color: #4a5565; }
.tag { display: inline-block; padding: 4px 12px; border-radius: 12px; font-size: 12px; line-height: 16px; font-weight: 700; color: var(--b); background: var(--c); }
.red { --a: #fb2c36; --b: #e7000b; --c: #fef2f2; }
.green { --a: #00c950; --b: #00a63e; --c: #f0fdf4; }
.blue { --a: #2b7fff; --b: #155dfc; --c: #eff6ff; }
.purple { --a: #ad46ff; --b: #9810fa; --c: #faf5ff; }
.stats { margin-top: 48px; display: flex; justify-content: center; gap: 32px; font-size: 14px; line-height: 20px; color: #6a7282; opacity: .6; }

.directory { padding: 33px 32px 32px; background: #f9fafc; }
.map-card { position: relative; background: #fff; border-radius: 24px; overflow: hidden; box-shadow: 0 25px 50px -12px rgba(0,0,0,.25); }
.map-head { height: 114px; padding: 65px 24px 0; color: #4a5565; background: linear-gradient(90deg, #f0fdf4, #eff6ff); border-bottom: 2px solid #85898c; }
.map { position: relative; height: 500px; border-radius: 16px 16px 0 0; overflow: hidden; background: #fdfdfd; }
.map-art { display: block; width: 1216px; height: 500px; }
.lake { fill: #dbdbdb; }
.line, .border, .speck { fill: none; stroke: #d0d0d0; stroke-width: 1; stroke-linejoin: round; vector-effect: non-scaling-stroke; }
.wide { stroke: #e2e2e2; stroke-width: 1.600; }
.border { stroke: #c4c4c4; stroke-width: 1.800; }
.speck { stroke: #dadada; stroke-width: 1.400; }
.states text { font: 700 8.800px "Roboto", sans-serif; fill: #b6b6b6; text-anchor: middle; }
.states .sm { font-size: 7.600px; }
.cities text { font: 500 11.500px "Roboto", sans-serif; fill: #858585; stroke: #fdfdfd; stroke-width: 1px; paint-order: stroke; text-anchor: middle; }
.cities .big { fill: #757575; font-size: 12px; }
.cities .country { font-size: 16px; fill: #707070; }
.mapbox { fill: #fff; stroke: #999; stroke-width: 1.500; }
.mapbox path { fill: #999; stroke: none; }
.mapbox text { font: 700 19px "Open Sans", sans-serif; stroke-width: 1; }
.legend { position: absolute; left: 16px; bottom: 16px; width: 136px; height: 104px; padding: 12px; display: flex; flex-direction: column; gap: 4px; border-radius: 12px; background: #fff; box-shadow: 0 10px 15px -3px rgba(0,0,0,.12), 0 0 3px rgba(0,0,0,.08); font-size: 12px; line-height: 16px; color: #4a5565; }
.legend b { margin-bottom: 4px; color: #364153; }
.legend div { display: flex; align-items: center; gap: 8px; white-space: nowrap; }
.legend i { width: 12px; height: 12px; border-radius: 50%; }
.dot-green { background: #00c950; }
.dot-red { background: #fb2c36; }
.dot-blue { background: #2b7fff; }
.controls { position: absolute; right: 10px; bottom: 10px; display: flex; flex-direction: column; gap: 10px; }
.ctl { width: 29px; border-radius: 4px; background: #fff; box-shadow: 0 0 0 2px rgba(0,0,0,.1); }
.ctl svg { display: block; }
.ctl .minus { height: 30px; border-top: 1px solid #ddd; }
.glyph { stroke: #333; stroke-width: 2.800; stroke-linecap: round; }

.section-title { font-size: 30px; line-height: 36px; text-align: center; }
.directory .section-title { margin-top: 64px; }
.narrow { width: 672px; margin: 16px auto 32px; text-align: center; }
.provider { width: 286px; height: 488px; border-radius: 24px; overflow: hidden; background: #fff; box-shadow: 0 10px 15px -3px rgba(0,0,0,.1), 0 4px 6px -4px rgba(0,0,0,.1); }
.photo { position: relative; height: 192px; background: linear-gradient(to bottom right, #dcfce7, #dbeafe); }
.broken { position: absolute; left: 1px; top: 0; width: 16px; height: 16px; }
.emergency { position: absolute; left: 12px; top: 12px; height: 24px; padding: 0 12px; border-radius: 12px; background: #fb2c36; color: #fff; font-size: 12px; font-weight: 700; opacity: .5; }
.fav { position: absolute; right: 12px; top: 12px; width: 40px; height: 40px; display: flex; align-items: center; justify-content: center; border-radius: 50%; background: rgba(255,255,255,.9); color: #4a5565; }
.fav .icon, .call .icon { width: 20px; height: 20px; }
.provider-body { padding: 24px; font-size: 14px; line-height: 20px; color: #4a5565; }
.name-row { display: flex; justify-content: space-between; align-items: flex-start; }
.name-row h3 { font-size: 18px; line-height: 28px; color: #101828; }
.name-row span { display: flex; align-items: center; gap: 4px; }
.gold { fill: #ffc800; stroke: #ffc800; }
.place { margin: 12px 0; display: flex; align-items: center; gap: 8px; }
.chip { display: block; width: fit-content; margin-top: 16px; padding: 4px 8px; border-radius: 12px; background: #dcfce7; color: #016630; font-size: 12px; line-height: 16px; }
.call { margin-top: 16px; height: 48px; display: flex; align-items: center; justify-content: center; gap: 8px; border-radius: 16px; background: #00a63e; color: #fff; font-size: 16px; font-weight: 700; }
.call .icon { stroke-width: 1.700; }
.actions { margin-top: 8px; display: grid; grid-template-columns: 1fr 1fr; gap: 8px; }
.actions div { height: 44px; display: flex; align-items: center; justify-content: center; gap: 4px; border-radius: 12px; background: #f3f4f6; color: #364153; }
.actions .dir { background: #dbeafe; color: #1447e6; }

.how { height: 448px; padding: 64px 32px; text-align: center; background: #fff; }
.big.sub { margin-top: 16px; font-size: 20px; line-height: 28px; }
.steps { margin-top: 48px; display: grid; grid-template-columns: repeat(3, 1fr); gap: 32px; }
.tile { width: 80px; height: 80px; margin: 0 auto 24px; display: flex; align-items: center; justify-content: center; border-radius: 24px; color: #fff; background: linear-gradient(90deg, var(--a), var(--b)); }
.tile .icon { width: 40px; height: 40px; }
.steps h3 { font-size: 20px; line-height: 28px; }
.steps p { margin-top: 12px; color: #4a5565; }

.cta { padding: 64px 224px; background: linear-gradient(to bottom right, #065026, #14347a 50%, #441a7d); }
.cta-card { padding: 32px; border: 1px solid rgba(255,255,255,.2); border-radius: 24px; background: rgba(255,255,255,.11); color: #fff; text-align: center; }
.cta-disc { width: 64px; height: 64px; margin: 0 auto 16px; border-radius: 50%; background: linear-gradient(90deg, #05df72, #51a2ff); font-size: 20px; line-height: 64px; }
.cta-disc i { display: inline-block; filter: hue-rotate(125deg) brightness(.75); }
.cta h2 { font-size: 30px; line-height: 36px; }
.cta p { margin-top: 16px; font-size: 20px; line-height: 32.5px; color: #dcfce7; }
.cta p b { color: #7bf1a8; }
.cta-btns { margin-top: 32px; display: flex; align-items: center; justify-content: center; gap: 16px; }
.primary { height: 60px; padding: 0 32px; display: flex; align-items: center; border-radius: 16px; background: #00a63e; font-size: 18px; font-weight: 700; box-shadow: 0 25px 50px -12px rgba(0,0,0,.25); }
.primary .icon { width: 20px; height: 20px; margin-left: 8px; }
.secondary { padding: 16px 24px; border: 1px solid rgba(255,255,255,.3); border-radius: 16px; background: rgba(255,255,255,.25); font-weight: 700; }
.perks { margin-top: 24px; display: flex; justify-content: center; gap: 24px; font-size: 14px; line-height: 20px; color: #b9f8cf; }
.perks span { display: flex; align-items: center; gap: 8px; }
.perks span::before { content: ""; width: 8px; height: 8px; border-radius: 50%; background: #05df72; }

/* development overlay pill */
.issues { position: absolute; left: 20px; top: 2102px; height: 36px; width: 126px; display: flex; align-items: center; padding-left: 2px; border-radius: 18px; background: #ca2a30; color: #fff; font: 500 13px "Inter", sans-serif; letter-spacing: -.2px; box-shadow: 0 0 0 1px #171717, inset 0 0 0 1px rgba(255,255,255,.2), 0 16px 32px -8px rgba(0,0,0,.24); }
.mark { width: 32px; height: 32px; margin-right: 10px; border-radius: 50%; background: rgba(255,255,255,.2); }
.issues .icon { width: 12px; height: 12px; margin-left: 9px; }
```
